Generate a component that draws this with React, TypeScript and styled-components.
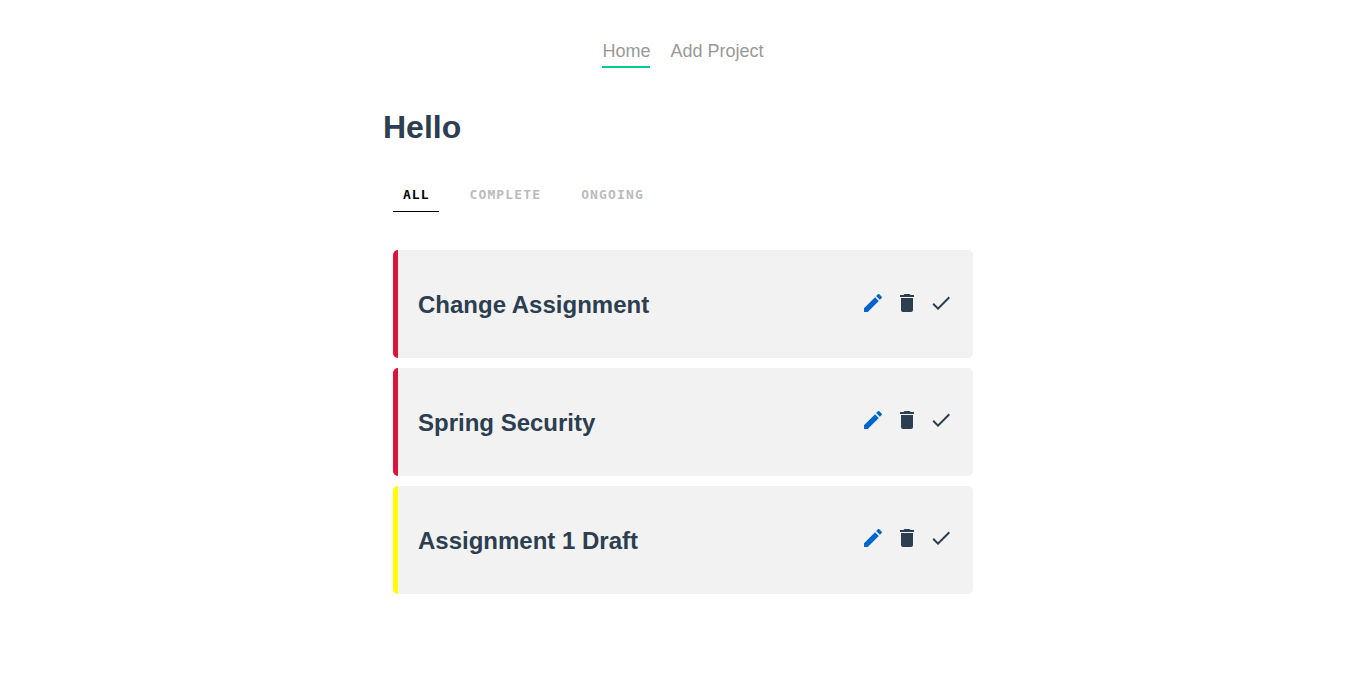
import React from 'react';
import styled, { createGlobalStyle } from 'styled-components';

const GlobalStyle = createGlobalStyle`
  * { margin: 0; padding: 0; box-sizing: border-box; }
  body {
    background: #fff;
    font-family: 'Liberation Sans', Arial, sans-serif;
    color: #2c3e50;
  }
`;

const Nav = styled.nav`
  display: flex;
  justify-content: center;
  gap: 20px;
  padding-top: 41px;
`;

const NavLink = styled.a<{ $active?: boolean }>`
  font-size: 18px;
  line-height: 21px;
  color: #999;
  text-decoration: none;
  padding-bottom: 4px;
  border-bottom: 2px solid ${(p) => (p.$active ? '#00ce89' : 'transparent')};
`;

const Main = styled.main`
  width: 600px;
  margin: 41px auto 0;
`;

const Title = styled.h1`
  font-size: 32px;
  line-height: 37px;
`;

const Filters = styled.div`
  display: flex;
  gap: 20px;
  margin: 35px 10px 38px;
`;

const FilterButton = styled.button<{ $active?: boolean }>`
  background: none;
  border: 0;
  border-bottom: 1px solid ${(p) => (p.$active ? '#000' : 'transparent')};
  padding: 7px 10px 9px;
  color: ${(p) => (p.$active ? '#000' : '#bbb')};
  font-family: 'DejaVu Sans Mono', monospace;
  font-size: 13px;
  line-height: 14px;
  font-weight: 700;
  letter-spacing: ${(p) => (p.$active ? '1px' : '1.13px')};
  text-transform: uppercase;
`;

const List = styled.div`
  display: flex;
  flex-direction: column;
  gap: 10px;
  padding: 0 10px;
`;

const Card = styled.article<{ $accent: string }>`
  display: flex;
  justify-content: space-between;
  align-items: center;
  height: 107.9px;
  padding: 0 20px;
  background: #f2f2f2;
  border-left: 5px solid ${(p) => p.$accent};
  border-radius: 5px;
`;

const CardTitle = styled.h2`
  font-size: 24px;
  line-height: 28px;
  padding-top: 2px;
`;

const Actions = styled.div`
  display: flex;
  gap: 10px;
  padding-bottom: 2.9px;
`;

const Icon = styled.svg<{ $blue?: boolean }>`
  width: 24px;
  height: 24px;
  fill: ${(p) => (p.$blue ? '#0066cc' : '#2c3e50')};
`;

const pencil =
  'M20.71,7.04C21.1,6.65 21.1,6 20.71,5.63L18.37,3.29C18,2.9 17.35,2.9 16.96,3.29L15.12,5.12L18.87,8.87M3,17.25V21H6.75L17.81,9.93L14.06,6.18L3,17.25Z';
const trash =
  'M19,4H15.5L14.5,3H9.5L8.5,4H5V6H19M6,19A2,2 0 0,0 8,21H16A2,2 0 0,0 18,19V7H6V19Z';
const check = 'M21,7L9,19L3.5,13.5L4.91,12.09L9,16.17L19.59,5.59L21,7Z';

const projects = [
  { title: 'Change Assignment', accent: 'crimson' },
  { title: 'Spring Security', accent: 'crimson' },
  { title: 'Assignment 1 Draft', accent: 'yellow' },
];

export default function App() {
  return (
    <>
      <GlobalStyle />
      <Nav>
        <NavLink $active>Home</NavLink>
        <NavLink>Add Project</NavLink>
      </Nav>
      <Main>
        <Title>Hello</Title>
        <Filters>
          <FilterButton $active>All</FilterButton>
          <FilterButton>Complete</FilterButton>
          <FilterButton>Ongoing</FilterButton>
        </Filters>
        <List>
          {projects.map((project) => (
            <Card key={project.title} $accent={project.accent}>
              <CardTitle>{project.title}</CardTitle>
              <Actions>
                <Icon viewBox="0 0 24 24" $blue><path d={pencil} /></Icon>
                <Icon viewBox="0 0 24 24"><path d={trash} /></Icon>
                <Icon viewBox="0 0 24 24"><path d={check} /></Icon>
              </Actions>
            </Card>
          ))}
        </List>
      </Main>
    </>
  );
}
